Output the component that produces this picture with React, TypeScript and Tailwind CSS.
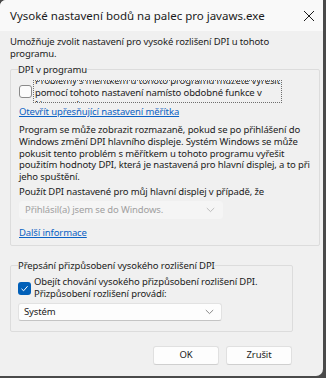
import { useState } from "react";

const font = { fontFamily: '"Segoe UI", "Noto Sans", sans-serif' };

function Chevron({ color }: { color: string }) {
    return (
        <svg width="9" height="6" viewBox="0 0 9 6" fill="none">
            <path d="M0.8 1 L4.5 4.6 L8.2 1" stroke={color} strokeWidth="0.9" />
        </svg>
    );
}

function Select({ value, disabled }: { value: string; disabled?: boolean }) {
    return (
        <div
            className={
                "flex h-[18px] w-[204px] items-center justify-between rounded-[3px] border pl-[5px] pr-[7px] " +
                (disabled
                    ? "border-[#f5f5f5] bg-[#f5f5f5] text-[#a0a0a0]"
                    : "border-[#e2e2e2] border-b-[#c4c4c4] bg-[#fdfdfd] text-[#1b1b1b]")
            }
        >
            <span>{value}</span>
            <Chevron color={disabled ? "#b5b5b5" : "#7a7a7a"} />
        </div>
    );
}

export default function App() {
    const [override, setOverride] = useState(true);

    return (
        <div
            className="h-[378px] w-[326px] overflow-hidden whitespace-nowrap bg-[#4a4a4a] text-[9.5px] leading-[11.75px] tracking-[-0.12px] text-[#1b1b1b]"
            style={font}
        >
            <div className="flex h-[376px] w-[323px] flex-col overflow-hidden rounded-br-[7px] rounded-tl-[6px] bg-[#f0f0f0]">
                {/* title bar */}
                <div className="flex h-[31px] shrink-0 items-center justify-between bg-[#f9f9f9] pl-[10px] pr-[8px]">
                    <span className="text-[11.5px] tracking-normal">Vysoké nastavení bodů na palec pro javaws.exe</span>
                    <svg width="12" height="12" viewBox="0 0 12 12">
                        <path d="M1 1 L11 11 M11 1 L1 11" stroke="#1b1b1b" strokeWidth="1" />
                    </svg>
                </div>

                <div className="flex flex-col px-[10px] pt-[5px]">
                    <p>
                        Umožňuje zvolit nastavení pro vysoké rozlišení DPI u tohoto
                        <br />
                        programu.
                    </p>

                    {/* DPI v programu */}
                    <fieldset className="mt-[4px] -mr-[7px] h-[182px] rounded-[2px] border border-[#dcdcdc] pl-[8px]">
                        <legend className="-ml-[1px]">DPI v programu</legend>
                        <div className="mt-[5px] flex items-center">
                            <div className="h-[13px] w-[13px] rounded-[3px] border border-[#8a8a8a] bg-[#fbfbfb]" />
                            <div className="ml-[1px] h-[23px] w-[249px] overflow-hidden border border-dotted border-[#6e6e6e] pl-[1px]">
                                <div className="-mt-[6px]">
                                    Problémy s měřítkem u tohoto programu můžete vyřešit
                                    <br />
                                    pomocí tohoto nastavení namísto obdobné funkce v
                                    <br />
                                    Nastavení.
                                </div>
                            </div>
                        </div>
                        <a className="mt-[3px] block text-[#0b62c4] underline">Otevřít upřesňující nastavení měřítka</a>
                        <p className="mt-[6px]">
                            Program se může zobrazit rozmazaně, pokud se po přihlášení do
                            <br />
                            Windows změní DPI hlavního displeje. Systém Windows se může
                            <br />
                            pokusit tento problém s měřítkem u tohoto programu vyřešit
                            <br />
                            použitím hodnoty DPI, která je nastavená pro hlavní displej, a to při
                            <br />
                            jeho spuštění.
                        </p>
                        <p className="mt-[3px]">Použít DPI nastavené pro můj hlavní displej v případě, že</p>
                        <div className="mt-[3px]">
                            <Select value="Přihlásil(a) jsem se do Windows." disabled />
                        </div>
                        <a className="mt-[8px] block text-[#0b62c4] underline">Další informace</a>
                    </fieldset>

                    {/* Přepsání */}
                    <fieldset className="mt-[14px] h-[72px] w-[283px] rounded-[2px] border border-[#dcdcdc] pl-[7px]">
                        <legend>Přepsání přizpůsobení vysokého rozlišení DPI</legend>
                        <div className="mt-[5px] flex items-center">
                            <button
                                onClick={() => setOverride(!override)}
                                className={
                                    "flex h-[13px] w-[13px] items-center justify-center rounded-[3px] " +
                                    (override ? "bg-[#005fb8]" : "border border-[#8a8a8a] bg-[#fbfbfb]")
                                }
                            >
                                {override && (
                                    <svg width="9" height="9" viewBox="0 0 9 9" fill="none">
                                        <path d="M1.5 4.8 L3.6 6.8 L7.6 2.2" stroke="#ffffff" strokeWidth="1" />
                                    </svg>
                                )}
                            </button>
                            <p className="ml-[3px]">
                                Obejít chování vysokého přizpůsobení rozlišení DPI.
                                <br />
                                Přizpůsobení rozlišení provádí:
                            </p>
                        </div>
                        <div className="mt-[3px]">
                            <Select value="Systém" />
                        </div>
                    </fieldset>

                    <div className="mt-[14px] flex justify-end gap-[7px] pr-[21px]">
                        <button className="h-[19px] w-[66px] rounded-[3px] border border-[#e0e0e0] border-b-[#cfcfcf] bg-[#fdfdfd]">
                            OK
                        </button>
                        <button className="h-[19px] w-[66px] rounded-[3px] border border-[#e0e0e0] border-b-[#cfcfcf] bg-[#fdfdfd]">
                            Zrušit
                        </button>
                    </div>
                </div>
            </div>
        </div>
    );
}
